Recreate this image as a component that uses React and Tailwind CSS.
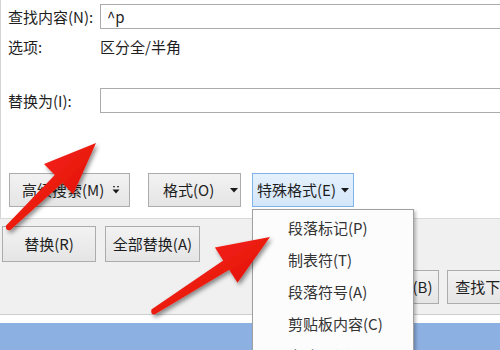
import React from "react";

const Tri = () => (
  <svg width="8" height="5" viewBox="0 0 8 5" className="shrink-0">
    <path d="M0 0 L8 0 L4 4.5 Z" fill="#1a1a1a" />
  </svg>
);

const MoreIcon = () => (
  <svg width="8" height="9" viewBox="0 0 8 9" className="shrink-0">
    <rect x="1" y="0" width="2" height="1.3" fill="#444" />
    <rect x="5" y="0" width="2" height="1.3" fill="#444" />
    <path d="M0.5 3.5 L7.5 3.5 L4 7.5 Z" fill="#1a1a1a" />
  </svg>
);

const btn =
  "h-[34px] border border-[#acacac] bg-gradient-to-b from-[#f2f2f2] to-[#e5e5e5] flex items-center";

export default function App() {
  return (
    <div className="relative w-[500px] h-[350px] overflow-hidden flex flex-col font-['Noto_Sans_CJK_SC','Microsoft_YaHei',sans-serif] text-[15px] leading-[20px] text-[#1e1e1e]">
      {/* white upper panel */}
      <div className="h-[219px] shrink-0 bg-white border-l border-[#d4d4d4] border-b border-b-[#d9d9d9] pt-[4px]">
        <div className="flex items-center h-[25px]">
          <div className="w-[99px] pl-[7px] whitespace-nowrap">查找内容(N):</div>
          <div className="flex-1 h-[25px] border border-[#ababab] border-r-0 flex items-center pl-[6px] whitespace-nowrap">
            ^p
          </div>
        </div>
        <div className="flex items-center h-[20px] mt-[8px]">
          <div className="w-[99px] pl-[7px]">选项:</div>
          <div className="whitespace-nowrap">区分全/半角</div>
        </div>
        <div className="flex items-center h-[25px] mt-[31px]">
          <div className="w-[99px] pl-[7px] whitespace-nowrap">替换为(I):</div>
          <div className="flex-1 h-[25px] border border-[#ababab] border-r-0" />
        </div>
        <div className="flex mt-[60px] pl-[8px]">
          <div className={`${btn} w-[121px] pl-[12px] pr-[9px] justify-between`}>
            <span className="whitespace-nowrap">高级搜索(M)</span>
            <MoreIcon />
          </div>
          <div className={`${btn} w-[93px] ml-[18px] pl-[14px] pr-[2px] justify-between`}>
            <span className="whitespace-nowrap">格式(O)</span>
            <Tri />
          </div>
          <div className="h-[34px] w-[102px] ml-[11px] border border-[#7eb4ea] bg-gradient-to-b from-[#e5f1fc] to-[#d4e7fa] flex items-center justify-between pl-[4px] pr-[4px]">
            <span className="whitespace-nowrap">特殊格式(E)</span>
            <Tri />
          </div>
        </div>
      </div>

      {/* gray lower panel */}
      <div className="h-[95px] shrink-0 bg-[#f0f0f0] pt-[7px]">
        <div className="flex pl-[2px] gap-[9px]">
          <div className={`${btn} h-[36px] w-[94px] justify-center`}>
            <span className="whitespace-nowrap">替换(R)</span>
          </div>
          <div className={`${btn} h-[36px] w-[95px] justify-center`}>
            <span className="whitespace-nowrap">全部替换(A)</span>
          </div>
        </div>
        <div className="flex pl-[346px] gap-[8px] mt-[8px] w-[700px]">
          <div className={`${btn} w-[93px] justify-center shrink-0`}>
            <span className="whitespace-nowrap">查找全部(B)</span>
          </div>
          <div className={`${btn} w-[110px] justify-center shrink-0`}>
            <span className="whitespace-nowrap">查找下一处(F)</span>
          </div>
        </div>
      </div>
      <div className="h-px shrink-0 bg-[#cdcdcd]" />
      <div className="h-[8px] shrink-0 bg-white" />
      <div className="flex-1 bg-[#8cb0e1]" />

      {/* dropdown menu */}
      <div className="absolute left-[252px] top-[209px] w-[162px] h-[160px] bg-[#fcfcfc] border border-[#a0a0a0] shadow-[2px_2px_3px_rgba(0,0,0,0.25)] pt-[2px]">
        {["段落标记(P)", "制表符(T)", "段落符号(A)", "剪贴板内容(C)", "省略号(E)"].map((t) => (
          <div key={t} className="h-[32px] flex items-center pl-[35px] text-[#333] whitespace-nowrap">
            {t}
          </div>
        ))}
      </div>

      {/* red arrows */}
      <svg className="absolute left-0 top-0 pointer-events-none" width="500" height="350" viewBox="0 0 500 350">
        <defs>
          <filter id="sh" x="-20%" y="-20%" width="140%" height="140%">
            <feDropShadow dx="2" dy="2.5" stdDeviation="2" floodColor="#000" floodOpacity="0.45" />
          </filter>
          <linearGradient id="rg" x1="0" y1="0" x2="1" y2="1">
            <stop offset="0" stopColor="#ff2a1c" />
            <stop offset="1" stopColor="#d80c06" />
          </linearGradient>
        </defs>
        <g filter="url(#sh)">
          <path
            d="M96 143 L44 164 L54.8 175.1 L5.9 225.8 Q5.5 231 10.1 230.2 L62.4 183.1 L73.2 194.2 Z"
            fill="url(#rg)"
          />
          <path
            d="M270 237 L214.9 247.4 L223.2 260.5 L151.4 309.5 Q150.5 315 154.6 314.5 L229.2 269.7 L237.5 282.8 Z"
            fill="url(#rg)"
          />
        </g>
      </svg>
    </div>
  );
}
